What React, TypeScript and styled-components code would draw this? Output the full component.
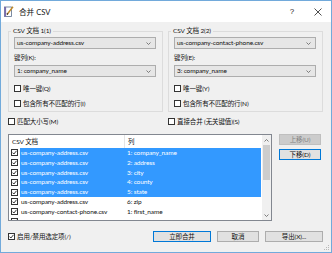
import React from "react";
import styled, { createGlobalStyle } from "styled-components";

const GlobalStyle = createGlobalStyle`
  html, body {
    margin: 0;
    padding: 0;
    background: #ffffff;
  }
  body {
    font-family: Lato, "Noto Sans CJK SC", sans-serif;
    font-size: 6.5px;
    letter-spacing: -0.12px;
    color: #111;
  }
`;

const Window = styled.div`
  position: relative;
  width: 332px;
  height: 253px;
  box-sizing: border-box;
  border: 1px solid #72aadb;
  background: #f0f0f0;
  display: flex;
  flex-direction: column;
  overflow: hidden;
`;

const TitleBar = styled.div`
  height: 21px;
  background: #ffffff;
  display: flex;
  align-items: center;
  padding-left: 3px;
`;

const Title = styled.span`
  font-size: 7.6px;
  letter-spacing: 0;
  margin-left: 5px;
  flex: 1;
`;

const TitleButton = styled.div`
  width: 26px;
  height: 21px;
  display: flex;
  align-items: center;
  justify-content: center;
  font-family: "Liberation Sans", sans-serif;
  font-size: 8px;
  color: #222;
`;

const Body = styled.div`
  flex: 1;
  display: flex;
  flex-direction: column;
  padding: 5px 8px 0 7px;
`;

const GroupRow = styled.div`
  display: flex;
  gap: 5px;
`;

const Group = styled.fieldset`
  flex: 1;
  min-width: 0;
  margin: 0;
  padding: 0 6px 3px 5px;
  border: 1px solid #dcdcdc;
  display: flex;
  flex-direction: column;
`;

const Legend = styled.legend`
  line-height: 8px;
  padding: 0 2px;
  margin-left: -3px;
`;

const Combo = styled.div<{ $gap: number }>`
  margin-top: ${({ $gap }) => $gap}px;
  height: 12px;
  box-sizing: border-box;
  border: 1px solid #adadad;
  background: #e6e6e6;
  display: flex;
  align-items: center;
  justify-content: space-between;
  padding: 0 4px 0 2px;
  line-height: 10px;
`;

const FieldLabel = styled.div`
  margin-top: 4px;
  height: 9px;
  line-height: 9px;
`;

const CheckRow = styled.label<{ $gap: number }>`
  margin-top: ${({ $gap }) => $gap}px;
  height: 9px;
  display: flex;
  align-items: center;
  gap: 2px;
  line-height: 9px;
`;

const Box = styled.span`
  width: 7px;
  height: 7px;
  box-sizing: border-box;
  border: 1px solid #333333;
  background: #ffffff;
  display: inline-flex;
  align-items: center;
  justify-content: center;
  flex: none;
`;

const OptionRow = styled.div`
  margin-top: 5px;
  display: flex;
  gap: 5px;
`;

const OptionCell = styled.div`
  flex: 1;
  display: flex;
`;

const ListRow = styled.div`
  margin-top: 8px;
  display: flex;
  gap: 7px;
`;

const List = styled.div`
  flex: 1;
  height: 87px;
  box-sizing: border-box;
  border: 1px solid #828790;
  background: #ffffff;
  display: flex;
  overflow: hidden;
`;

const ListContent = styled.div`
  flex: 1;
  min-width: 0;
  overflow: hidden;
`;

const Header = styled.div`
  height: 13px;
  display: flex;
  align-items: center;
  line-height: 13px;
`;

const HeaderCell = styled.div<{ $width?: number }>`
  width: ${({ $width }) => ($width ? `${$width}px` : "auto")};
  flex: ${({ $width }) => ($width ? "none" : "1")};
  box-sizing: border-box;
  padding-left: 3px;
  height: 13px;
  border-right: ${({ $width }) => ($width ? "1px solid #e5e5e5" : "none")};
`;

const Row = styled.div`
  height: 9.8px;
  display: flex;
  align-items: center;
`;

const CheckCell = styled.div`
  width: 11px;
  flex: none;
  display: flex;
  justify-content: center;
`;

const Selection = styled.div<{ $selected: boolean }>`
  flex: 1;
  height: 9.8px;
  margin-right: 1px;
  display: flex;
  align-items: center;
  line-height: 9.8px;
  background: ${({ $selected }) => ($selected ? "#3399ff" : "transparent")};
  color: ${({ $selected }) => ($selected ? "#ffffff" : "#111111")};
`;

const FileCell = styled.div`
  width: 104px;
  padding-left: 1px;
  box-sizing: border-box;
  white-space: nowrap;
  overflow: hidden;
`;

const ColumnCell = styled.div`
  padding-left: 3px;
  white-space: nowrap;
`;

const ScrollBar = styled.div`
  width: 9px;
  flex: none;
  background: #f0f0f0;
  display: flex;
  flex-direction: column;
`;

const ScrollArrow = styled.div`
  height: 10px;
  display: flex;
  align-items: center;
  justify-content: center;
`;

const ScrollTrack = styled.div`
  flex: 1;
`;

const Thumb = styled.div`
  height: 35px;
  margin: 0 1px;
  background: #cdcdcd;
`;

const SideButtons = styled.div`
  width: 42px;
  padding-right: 2px;
  display: flex;
  flex-direction: column;
  gap: 4px;
`;

const Button = styled.button<{ $width?: number; $primary?: boolean }>`
  width: ${({ $width }) => ($width ? `${$width}px` : "100%")};
  height: 11px;
  box-sizing: border-box;
  padding: 0;
  border: 1px solid ${({ $primary }) => ($primary ? "#0078d7" : "#adadad")};
  background: #e1e1e1;
  font: inherit;
  letter-spacing: inherit;
  line-height: 9px;
  color: #111;
  &:disabled {
    background: #cccccc;
    border-color: #bfbfbf;
    color: #838383;
  }
`;

const Footer = styled.div`
  margin-top: 10px;
  display: flex;
  align-items: center;
  gap: 6px;
`;

const FooterCheck = styled.label`
  flex: 1;
  display: flex;
  align-items: center;
  gap: 2px;
  line-height: 9px;
`;

const Grip = styled.svg`
  position: absolute;
  right: 1px;
  bottom: 1px;
`;

const Tick = () => (
  <svg width="5" height="5" viewBox="0 0 5 5">
    <polyline points="0.5,2.6 1.9,4 4.5,0.8" fill="none" stroke="#222" strokeWidth="0.9" />
  </svg>
);

const CheckBox = ({ checked }: { checked?: boolean }) => <Box>{checked && <Tick />}</Box>;

const Chevron = ({ up }: { up?: boolean }) => (
  <svg width="5" height="3" viewBox="0 0 5 3">
    <polyline
      points={up ? "0.5,2.5 2.5,0.5 4.5,2.5" : "0.5,0.5 2.5,2.5 4.5,0.5"}
      fill="none"
      stroke="#606060"
      strokeWidth="0.8"
    />
  </svg>
);

const AppIcon = () => (
  <svg width="10" height="11" viewBox="0 0 10 11">
    <rect x="0.5" y="1" width="7" height="9.5" fill="#ffffff" stroke="#5d6f8c" strokeWidth="0.8" />
    <rect x="0.5" y="1" width="1.6" height="9.5" fill="#7a6bb0" />
    <line x1="3" y1="8.5" x2="9" y2="0.8" stroke="#c08a2a" strokeWidth="1.4" />
    <line x1="3" y1="8.5" x2="3.8" y2="7.4" stroke="#333" strokeWidth="1.4" />
  </svg>
);

const rows = [
  { file: "us-company-address.csv", column: "1: company_name", selected: true },
  { file: "us-company-address.csv", column: "2: address", selected: true },
  { file: "us-company-address.csv", column: "3: city", selected: true },
  { file: "us-company-address.csv", column: "4: county", selected: true },
  { file: "us-company-address.csv", column: "5: state", selected: true },
  { file: "us-company-address.csv", column: "6: zip", selected: false },
  { file: "us-company-contact-phone.csv", column: "1: first_name", selected: false },
  { file: "us-company-contact-phone.csv", column: "2: last_name", selected: false },
];

const sources = [
  { legend: "CSV 文档 1(1)", file: "us-company-address.csv", key: "键列(K):", column: "1: company_name", unique: "唯一键(Q)", all: "包含所有不匹配的行(I)" },
  { legend: "CSV 文档 2(2)", file: "us-company-contact-phone.csv", key: "键列(E):", column: "3: company_name", unique: "唯一键(Y)", all: "包含所有不匹配的行(N)" },
];

export default function App() {
  return (
    <>
      <GlobalStyle />
      <Window>
        <TitleBar>
          <AppIcon />
          <Title>合并 CSV</Title>
          <TitleButton>?</TitleButton>
          <TitleButton>
            <svg width="8" height="8" viewBox="0 0 8 8">
              <path d="M0.5 0.5 L7.5 7.5 M7.5 0.5 L0.5 7.5" stroke="#222" strokeWidth="0.8" />
            </svg>
          </TitleButton>
        </TitleBar>
        <Body>
          <GroupRow>
            {sources.map((s) => (
              <Group key={s.legend}>
                <Legend>{s.legend}</Legend>
                <Combo $gap={2}>
                  <span>{s.file}</span>
                  <Chevron />
                </Combo>
                <FieldLabel>{s.key}</FieldLabel>
                <Combo $gap={3}>
                  <span>{s.column}</span>
                  <Chevron />
                </Combo>
                <CheckRow $gap={7}>
                  <CheckBox />
                  {s.unique}
                </CheckRow>
                <CheckRow $gap={6}>
                  <CheckBox />
                  {s.all}
                </CheckRow>
              </Group>
            ))}
          </GroupRow>
          <OptionRow>
            <OptionCell>
              <CheckRow $gap={0}>
                <CheckBox />
                匹配大小写(M)
              </CheckRow>
            </OptionCell>
            <OptionCell>
              <CheckRow $gap={0}>
                <CheckBox />
                直接合并 (无关键值)(S)
              </CheckRow>
            </OptionCell>
          </OptionRow>
          <ListRow>
            <List>
              <ListContent>
                <Header>
                  <HeaderCell $width={116}>CSV 文档</HeaderCell>
                  <HeaderCell>列</HeaderCell>
                </Header>
                {rows.map((r, i) => (
                  <Row key={i}>
                    <CheckCell>
                      <CheckBox checked />
                    </CheckCell>
                    <Selection $selected={r.selected}>
                      <FileCell>{r.file}</FileCell>
                      <ColumnCell>{r.column}</ColumnCell>
                    </Selection>
                  </Row>
                ))}
              </ListContent>
              <ScrollBar>
                <ScrollArrow>
                  <Chevron up />
                </ScrollArrow>
                <ScrollTrack>
                  <Thumb />
                </ScrollTrack>
                <ScrollArrow>
                  <Chevron />
                </ScrollArrow>
              </ScrollBar>
            </List>
            <SideButtons>
              <Button disabled>上移(U)</Button>
              <Button $primary>下移(D)</Button>
            </SideButtons>
          </ListRow>
          <Footer>
            <FooterCheck>
              <CheckBox checked />
              启用/禁用选定项(/)
            </FooterCheck>
            <Button $width={58} $primary>
              立即合并
            </Button>
            <Button $width={42}>取消</Button>
            <Button $width={58}>导出(X)...</Button>
          </Footer>
        </Body>
        <Grip width="8" height="8" viewBox="0 0 8 8">
          <rect x="6" y="2" width="1" height="1" fill="#b8b8b8" />
          <rect x="4" y="4" width="1" height="1" fill="#b8b8b8" />
          <rect x="6" y="4" width="1" height="1" fill="#b8b8b8" />
          <rect x="2" y="6" width="1" height="1" fill="#b8b8b8" />
          <rect x="4" y="6" width="1" height="1" fill="#b8b8b8" />
          <rect x="6" y="6" width="1" height="1" fill="#b8b8b8" />
        </Grip>
      </Window>
    </>
  );
}
